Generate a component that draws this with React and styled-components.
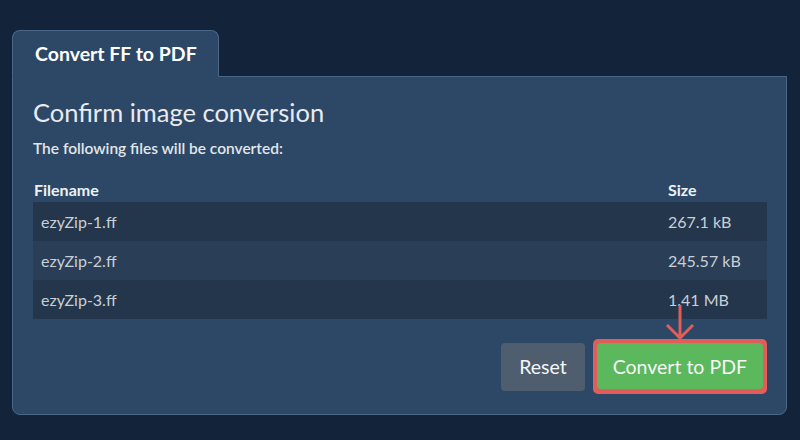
import React from 'react';
import styled, { createGlobalStyle } from 'styled-components';

const GlobalStyle = createGlobalStyle`
    html, body {
        margin: 0;
        padding: 0;
        background: #12233a;
        font-family: 'Lato', 'Liberation Sans', sans-serif;
    }
`;

const Page = styled.div`
    padding: 30px 13px 0 12px;
    width: 800px;
    height: 440px;
    box-sizing: border-box;
`;

const Tabs = styled.div`
    display: flex;
`;

const Tab = styled.div`
    position: relative;
    z-index: 1;
    margin-bottom: -1px;
    padding: 0 21px 0 22px;
    height: 47px;
    box-sizing: border-box;
    display: flex;
    align-items: center;
    background: #2c4866;
    border: 1px solid #4b6788;
    border-bottom-color: #2c4866;
    border-radius: 8px 8px 0 0;
    color: #fff;
    font-size: 19.5px;
    font-weight: 700;
`;

const Panel = styled.div`
    background: #2c4866;
    border: 1px solid #4b6788;
    border-radius: 0 0 8px 8px;
    padding: 19px 19px 0 20px;
    height: 339px;
    box-sizing: border-box;
`;

const Heading = styled.h2`
    margin: 0;
    font-size: 25.5px;
    font-weight: 400;
    line-height: 32px;
    color: #e8ebef;
`;

const Intro = styled.p`
    margin: 10px 0 0;
    font-size: 15.5px;
    line-height: 20px;
    font-weight: 600;
    color: #e2e6ea;
`;

const Table = styled.div`
    margin-top: 22px;
    display: grid;
    grid-template-columns: 635px 1fr;
`;

const HeadCell = styled.div`
    padding: 0 0 2px ${p => (p.$first ? '1px' : '0')};
    font-size: 16px;
    font-weight: 700;
    color: #eef1f4;
    line-height: 20px;
`;

const Cell = styled.div`
    height: 39px;
    display: flex;
    align-items: center;
    padding-left: ${p => (p.$first ? '8px' : '0')};
    background: ${p => (p.$odd ? '#2a3f57' : '#24364b')};
    color: #c9cfd6;
    font-size: 16px;
`;

const Actions = styled.div`
    margin-top: 20px;
    display: flex;
    justify-content: flex-end;
    align-items: center;
    gap: 8px;
`;

const Button = styled.button`
    height: ${p => p.$h};
    padding: 0 ${p => p.$pad};
    border: none;
    border-radius: 4px;
    font-family: inherit;
    font-size: 19.5px;
    font-weight: 400;
    color: #f4f6f8;
    background: ${p => p.$bg};
`;

const Highlight = styled.div`
    position: relative;
    display: flex;
    border: 4px solid #e05d59;
    border-bottom-width: 5px;
    border-radius: 5px;
    background: #e05d59;
`;

const Arrow = styled.svg`
    position: absolute;
    left: 50%;
    bottom: 100%;
    margin-left: -15px;
    margin-bottom: 3px;
`;

const files = [
    { name: 'ezyZip-1.ff', size: '267.1 kB' },
    { name: 'ezyZip-2.ff', size: '245.57 kB' },
    { name: 'ezyZip-3.ff', size: '1.41 MB' },
];

const App = () => (
    <Page>
        <GlobalStyle />
        <Tabs>
            <Tab>Convert FF to PDF</Tab>
        </Tabs>
        <Panel>
            <Heading>Confirm image conversion</Heading>
            <Intro>The following files will be converted:</Intro>
            <Table>
                <HeadCell $first>Filename</HeadCell>
                <HeadCell>Size</HeadCell>
                {files.map((f, i) => (
                    <React.Fragment key={f.name}>
                        <Cell $first $odd={i % 2 === 1}>{f.name}</Cell>
                        <Cell $odd={i % 2 === 1}>{f.size}</Cell>
                    </React.Fragment>
                ))}
            </Table>
            <Actions>
                <Button $bg="#4f5e6e" $h="48px" $pad="18px">Reset</Button>
                <Highlight>
                    <Arrow width="30" height="35" viewBox="0 0 30 35">
                        <path d="M15 0 V33 M2 20 L15 33 L28 20" fill="none" stroke="#e05d59" strokeWidth="3" />
                    </Arrow>
                    <Button $bg="#5cb85c" $h="46px" $pad="16px">Convert to PDF</Button>
                </Highlight>
            </Actions>
        </Panel>
    </Page>
);

export default App;
